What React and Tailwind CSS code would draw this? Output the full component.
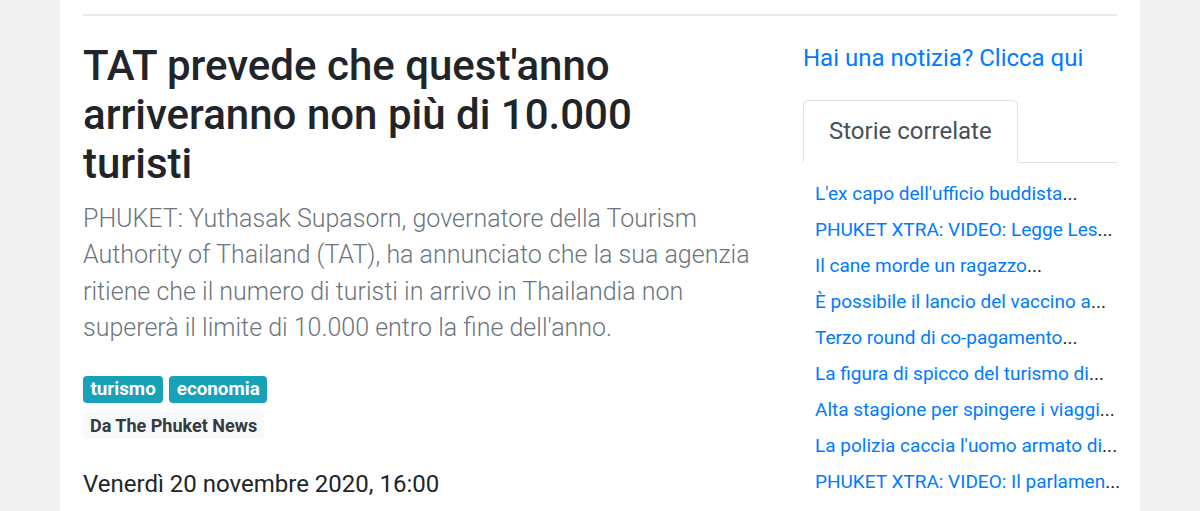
const related = [
  "L'ex capo dell'ufficio buddista",
  "PHUKET XTRA: VIDEO: Legge Les",
  "Il cane morde un ragazzo",
  "È possibile il lancio del vaccino a",
  "Terzo round di co-pagamento",
  "La figura di spicco del turismo di",
  "Alta stagione per spingere i viaggi",
  "La polizia caccia l'uomo armato di",
  "PHUKET XTRA: VIDEO: Il parlamen",
];

export default function App() {
  return (
    <div className="h-[511px] overflow-hidden bg-[#f0f0f0] font-['Roboto',sans-serif]">
      <div className="mx-[60px] h-full bg-white px-[23px] pt-[14px]">
        <div className="h-[2px] bg-[#e8e8e8]" />
        <div className="flex gap-[40px]">
          {/* article */}
          <div className="w-[680px] shrink-0">
            <h1 className="mt-[25px] max-w-[600px] text-[42px] leading-[49px] font-medium text-[#212529]">
              TAT prevede che quest'anno arriveranno non più di 10.000 turisti
            </h1>
            <p className="mt-[13px] text-[25px] leading-[36.3px] font-light text-[#6c757d]">
              PHUKET: Yuthasak Supasorn, governatore della Tourism Authority of Thailand (TAT), ha annunciato che la sua agenzia ritiene che il numero di turisti in arrivo in Thailandia non supererà il limite di 10.000 entro la fine dell'anno.
            </p>
            <div className="mt-[30px] flex gap-[6px]">
              <span className="rounded-[4px] bg-[#17a2b8] px-[7.5px] h-[27px] leading-[27px] text-[18.8px] font-bold text-white">turismo</span>
              <span className="rounded-[4px] bg-[#17a2b8] px-[7.5px] h-[27px] leading-[27px] text-[18.8px] font-bold text-white">economia</span>
            </div>
            <div className="mt-[9px] flex">
              <span className="rounded-[4px] bg-[#f8f9fa] px-[7px] h-[27px] leading-[27px] text-[18px] font-bold text-[#343a40]">Da The Phuket News</span>
            </div>
            <p className="mt-[27px] text-[24px] leading-[36px] text-[#212529]">Venerdì 20 novembre 2020, 16:00</p>
          </div>

          {/* sidebar */}
          <div className="w-[315px] shrink-0 pt-[26px]">
            <a className="block text-[24px] leading-[32px] text-[#007bff]">Hai una notizia? Clicca qui</a>
            <div className="mt-[26px] flex border-b border-[#dee2e6]">
              <div className="-mb-px h-[63px] rounded-t-[6px] border border-b-white border-[#dee2e6] bg-white px-[25px] text-[24px] leading-[61px] text-[#495057]">
                Storie correlate
              </div>
            </div>
            <ul className="mt-[13px]">
              {related.map((t, i) => (
                <li key={i} className="px-[12px] h-[36px] text-[19px] leading-[36px] whitespace-nowrap text-[#212529]">
                  <a className="text-[#007bff]">{t}</a>...
                </li>
              ))}
            </ul>
          </div>
        </div>
      </div>
    </div>
  );
}
